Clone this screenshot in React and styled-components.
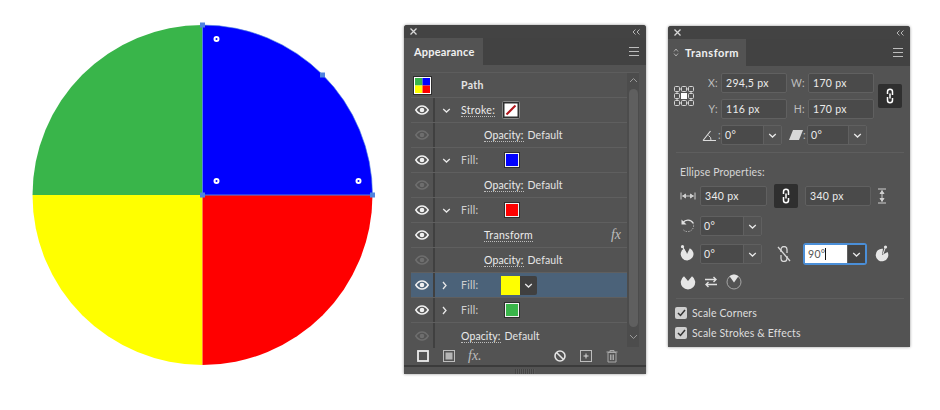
import styled, { createGlobalStyle } from 'styled-components'

const GlobalStyle = createGlobalStyle`
  html, body { margin: 0; padding: 0; background: #fff; }
  body { font-family: "Lato", "Open Sans", sans-serif; }
`

const Page = styled.div`
  width: 940px;
  height: 410px;
  display: flex;
  align-items: flex-start;
  overflow: hidden;
`

const Artwork = styled.svg`
  width: 350px;
  height: 350px;
  flex: none;
  margin: 20px 26px 0 28px;
`

const Panel = styled.section`
  width: 242px;
  height: ${p => p.$height}px;
  flex: none;
  margin-top: ${p => p.$top}px;
  margin-right: 22px;
  background: #535353;
  border-radius: 3px 3px 0 0;
  box-shadow: 0 0 3px rgba(0, 0, 0, .45);
  color: #e4e4e4;
  font-size: 10.5px;
  letter-spacing: .3px;
  display: flex;
  flex-direction: column;
  overflow: hidden;
`

const TitleBar = styled.div`
  height: 13px;
  background: #434343;
  display: flex;
  align-items: center;
  justify-content: space-between;
  padding: 0 6px 0 6px;
  color: #c8c8c8;
  font-size: 9px;
  line-height: 13px;
`

const TabBar = styled.div`
  height: 27px;
  flex: none;
  background: #424242;
  display: flex;
  justify-content: space-between;
  align-items: center;
  padding-right: 7px;
`

const Tab = styled.div`
  width: ${p => p.$width}px;
  height: 27px;
  background: #535353;
  display: flex;
  align-items: center;
  padding-left: ${p => p.$pad}px;
  gap: 6px;
  box-sizing: border-box;
  font-size: 11px;
  font-weight: 700;
  color: #f0f0f0;
  letter-spacing: ${p => p.$spacing}px;
`

const Burger = styled.div`
  width: 10px;
  height: 7px;
  border-top: 1px solid #bdbdbd;
  border-bottom: 1px solid #bdbdbd;
  position: relative;
  &::after {
    content: '';
    position: absolute;
    left: 0;
    right: 0;
    top: 3px;
    height: 1px;
    background: #bdbdbd;
  }
`

const ListBox = styled.div`
  margin: 7px 7px 0;
  display: flex;
  height: 274px;
  border-top: 1px solid #5d5d5d;
`

const Rows = styled.div`
  width: 216px;
  flex: none;
`

const Row = styled.div`
  height: 25px;
  box-sizing: border-box;
  display: flex;
  align-items: center;
  border-bottom: 1px solid #5f5f5f;
  background: ${p => (p.$selected ? '#4b6279' : 'transparent')};
  &:last-child { border-bottom: none; }
`

const EyeCell = styled.div`
  width: 24px;
  height: 100%;
  flex: none;
  box-sizing: border-box;
  border-right: 2px solid ${p => (p.$none ? 'transparent' : '#404040')};
  display: flex;
  align-items: center;
  justify-content: center;
`

const Twist = styled.div`
  width: 26px;
  flex: none;
  display: flex;
  justify-content: center;
  padding-right: ${p => (p.$right ? 8 : 4)}px;
  box-sizing: border-box;
`

const Label = styled.span`
  color: ${p => (p.$dim ? '#cfcfcf' : '#e4e4e4')};
  width: ${p => (p.$width ? `${p.$width}px` : 'auto')};
  margin-left: ${p => p.$indent || 0}px;
  font-weight: ${p => (p.$bold ? 700 : 400)};
  letter-spacing: ${p => (p.$tight ? '.1px' : 'inherit')};
  flex: none;
  white-space: nowrap;
`

const Dotted = styled.span`
  border-bottom: 1px dotted #bdbdbd;
  margin-right: 4px;
  color: #ececec;
`

const Swatch = styled.div`
  width: 12px;
  height: 12px;
  margin-left: 2px;
  background: ${p => p.$color};
  border: 1px solid #f2f2f2;
  outline: 1px solid #2e2e2e;
  flex: none;
`

const StrokeSwatch = styled.svg`
  width: 18px;
  height: 18px;
  flex: none;
  margin-left: -1px;
`

const BigSwatch = styled.div`
  width: 19px;
  height: 19px;
  background: #ffff00;
  flex: none;
  margin-left: -2px;
`

const SwatchMenu = styled.div`
  width: 17px;
  height: 19px;
  background: #404040;
  display: flex;
  align-items: center;
  justify-content: center;
  border-radius: 0 2px 2px 0;
`

const FxMark = styled.span`
  margin-left: auto;
  margin-right: 6px;
  font-family: "Liberation Serif", serif;
  font-style: italic;
  font-size: 14px;
  color: #bdbdbd;
  letter-spacing: 0;
`

const ScrollTrack = styled.div`
  width: 12px;
  flex: none;
  background: #4c4c4c;
  display: flex;
  flex-direction: column;
  align-items: center;
  padding-top: 4px;
  box-sizing: border-box;
`

const ScrollThumb = styled.div`
  width: 9px;
  height: 238px;
  margin: 6px 0 7px;
  background: #5f5f5f;
  border-radius: 5px;
`

const Toolbar = styled.div`
  height: 18px;
  display: flex;
  align-items: center;
  padding-left: 12px;
  color: #c9c9c9;
  flex: none;
`

const Grip = styled.div`
  flex: 1;
  border-top: 2px solid #3b3b3b;
  display: flex;
  justify-content: center;
  padding-top: 2px;
  &::after {
    content: '';
    width: 20px;
    height: 5px;
    background: repeating-linear-gradient(90deg, #444 0 1px, #5a5a5a 1px 2px);
  }
`

const ToolIcon = styled.svg`
  width: 14px;
  height: 14px;
  flex: none;
  margin-left: ${p => p.$gap || 0}px;
`

const FxTool = styled.span`
  font-family: "Liberation Serif", serif;
  font-style: italic;
  font-size: 14px;
  color: #bdbdbd;
  margin-left: ${p => p.$gap}px;
  width: 16px;
  letter-spacing: 0;
`

const TransformBody = styled.div`
  padding: 7px 6px 0 6px;
  display: flex;
  flex-direction: column;
  flex: 1;
  font-size: 10.5px;
`

const RefGrid = styled.div`
  display: flex;
  align-items: flex-start;
`

const RefPoint = styled.svg`
  width: 20px;
  height: 20px;
  margin-top: 13px;
  flex: none;
`

const CoordGrid = styled.div`
  margin-left: 14px;
  display: grid;
  grid-template-columns: 13px 66px 21px 66px;
  grid-auto-rows: 20px;
  row-gap: 6px;
  align-items: center;
`

const CoordLabel = styled.span`
  color: #bdbdbd;
  text-align: right;
  padding-right: 3px;
`

const Field = styled.div`
  width: ${p => p.$width || 66}px;
  height: 20px;
  box-sizing: border-box;
  border: 1px solid #606060;
  border-radius: 2px;
  background: #4a4a4a;
  display: flex;
  align-items: center;
  padding-left: 4px;
  margin-left: ${p => p.$left || 0}px;
  color: #ececec;
  font-size: 10.5px;
  flex: none;
`

const Combo = styled.div`
  width: ${p => p.$width || 62}px;
  height: 20px;
  box-sizing: border-box;
  flex: none;
  display: flex;
  border: 1px solid ${p => (p.$focus ? '#4b8fd8' : '#606060')};
  border-radius: 2px;
  background: #4a4a4a;
  box-shadow: ${p => (p.$focus ? '0 0 0 1px #4b8fd8' : 'none')};
`

const ComboValue = styled.div`
  flex: 1;
  display: flex;
  align-items: center;
  padding-left: 3px;
  color: ${p => (p.$focus ? '#555' : '#ececec')};
  background: ${p => (p.$focus ? '#fff' : 'transparent')};
`

const Caret = styled.i`
  width: 1px;
  height: 12px;
  background: #111;
`

const ComboArrow = styled.div`
  width: 17px;
  flex: none;
  display: flex;
  align-items: center;
  justify-content: center;
  border-left: 1px solid #606060;
  background: ${p => (p.$focus ? '#444' : '#535353')};
`

const LinkButton = styled.div`
  width: 24px;
  height: 24px;
  border-radius: 2px;
  background: #2f2f2f;
  display: flex;
  align-items: center;
  justify-content: center;
  flex: none;
  margin-left: ${p => p.$gap || 0}px;
  margin-top: ${p => p.$top || 0}px;
`

const Separator = styled.div`
  height: 1px;
  background: #5e5e5e;
  margin: ${p => p.$margin};
`

const SectionTitle = styled.div`
  color: #d6d6d6;
  font-size: 10.5px;
  line-height: 14px;
  margin: 12px 0 7px 6px;
  letter-spacing: .13px;
`

const EllipseRow = styled.div`
  display: flex;
  align-items: center;
  height: ${p => p.$height || 20}px;
  margin-top: ${p => p.$before || 0}px;
  margin-bottom: ${p => p.$after || 0}px;
  padding-left: 6px;
`

const RowIcon = styled.svg`
  width: ${p => p.$size || 16}px;
  height: ${p => p.$tall || p.$size || 16}px;
  flex: none;
  margin-left: ${p => p.$left || 0}px;
  margin-right: ${p => p.$right || 0}px;
`

const Colon = styled.span`
  color: #bdbdbd;
  width: ${p => p.$width}px;
  flex: none;
`

const CheckRow = styled.label`
  display: flex;
  align-items: center;
  gap: 5px;
  height: 20px;
  margin-left: 1px;
  color: #dedede;
  letter-spacing: .15px;
`

const CheckBox = styled.span`
  width: 12px;
  height: 12px;
  background: #cfcfcf;
  border-radius: 2px;
  display: flex;
  align-items: center;
  justify-content: center;
`

const Eye = ({ dim }) => (
  <svg width="14" height="10" viewBox="0 0 14 10">
    <path d="M.8 5C2.6 2.2 4.7 1 7 1s4.4 1.2 6.2 4C11.4 7.8 9.300 9 7 9S2.600 7.800.8 5z" fill="none" stroke={dim ? '#6e6e6e' : '#f0f0f0'} strokeWidth="1.500" />
    <circle cx="7" cy="5" r="2.300" fill={dim ? '#6e6e6e' : '#f0f0f0'} />
  </svg>
)

const Chevron = ({ dir = 'down', color = '#e8e8e8' }) => (
  <svg width="9" height="9" viewBox="0 0 9 9">
    <path d={dir === 'down' ? 'M1.200 3l3.300 3 3.300-3' : 'M3 1l3 3.500-3 3.500'} fill="none" stroke={color} strokeWidth="1.300" />
  </svg>
)

const CloseX = () => (
  <svg width="7" height="7" viewBox="0 0 7 7">
    <path d="M.5.5l6 6M6.500.5l-6 6" stroke="#d8d8d8" strokeWidth="1.300" />
  </svg>
)

const Collapse = () => (
  <svg width="8" height="6" viewBox="0 0 8 6">
    <path d="M3.500.5L1 3l2.500 2.500M7.500.5L5 3l2.500 2.500" fill="none" stroke="#b5b5b5" />
  </svg>
)

const ChainLink = ({ color = '#fff' }) => (
  <svg width="10" height="16" viewBox="0 0 10 16">
    <path d="M2.500 6V3.800a2.500 2.500 0 0 1 5 0V7M7.500 10v2.200a2.500 2.500 0 0 1-5 0V9M5 5.500v5" fill="none" stroke={color} strokeWidth="1.500" />
  </svg>
)

const Check = () => (
  <svg width="9" height="8" viewBox="0 0 9 8"><path d="M1 4l2.500 2.500L8 1" fill="none" stroke="#333" strokeWidth="1.500" /></svg>
)

const cx = 174.5
const cy = 175
const r = 170

const quarter = (x, y, sweepX, sweepY) =>
  `M${cx} ${cy}L${cx + x * r} ${cy + y * r}A${r} ${r} 0 0 1 ${cx + sweepX * r} ${cy + sweepY * r}Z`

const Anchor = ({ x, y }) => <rect x={x - 2.500} y={y - 2.500} width="5" height="5" fill="#4f83e0" />

const Widget = ({ x, y }) => (
  <circle cx={x} cy={y} r="2" fill="#0000ff" stroke="#fff" strokeWidth="2" />
)

function Circle() {
  return (
    <Artwork viewBox="0 0 350 350">
      <path d={quarter(-1, 0, 0, -1)} fill="#39b54a" />
      <path d={quarter(0, 1, -1, 0)} fill="#ffff00" />
      <path d={quarter(1, 0, 0, 1)} fill="#ff0000" />
      <path d={quarter(0, -1, 1, 0)} fill="#0000ff" />
      <path d={`M${cx} ${cy - r}V${cy}H${cx + r}`} fill="none" stroke="#4f83e0" />
      <path d={`M${cx} ${cy - r}A${r} ${r} 0 0 1 ${cx + r} ${cy}`} fill="none" stroke="#4f83e0" strokeOpacity=".6" />
      <Anchor x={cx} y={cy - r} />
      <Anchor x={cx + 120} y={cy - 120} />
      <Anchor x={cx + r} y={cy} />
      <Anchor x={cx} y={cy} />
      <Widget x={cx + 14} y={cy - 156} />
      <Widget x={cx + 14} y={cy - 14} />
      <Widget x={cx + 156} y={cy - 14} />
    </Artwork>
  )
}

const AppearanceRow = ({ dim, twist, selected, children }) => (
  <Row $selected={selected}>
    <EyeCell><Eye dim={dim} /></EyeCell>
    <Twist $right={twist === 'right'}>{twist && <Chevron dir={twist} />}</Twist>
    {children}
  </Row>
)

const OpacityRow = ({ indent = 23 }) => (
  <AppearanceRow dim>
    <Label $indent={indent} $tight><Dotted>Opacity:</Dotted>Default</Label>
  </AppearanceRow>
)

function AppearancePanel() {
  return (
    <Panel $height={349} $top={25}>
      <TitleBar><CloseX /><Collapse /></TitleBar>
      <TabBar>
        <Tab $width={79} $pad={10} $spacing={0.2}>Appearance</Tab>
        <Burger />
      </TabBar>
      <ListBox>
        <Rows>
          <Row>
            <EyeCell $none>
              <svg width="19" height="19" viewBox="0 0 19 19">
                <rect x=".5" y=".5" width="18" height="18" fill="#fff" stroke="#2e2e2e" />
                <rect x="2" y="2" width="7.500" height="7.500" fill="#39b54a" />
                <rect x="9.500" y="2" width="7.500" height="7.500" fill="#0000ff" />
                <rect x="2" y="9.500" width="7.500" height="7.500" fill="#ffff00" />
                <rect x="9.500" y="9.500" width="7.500" height="7.500" fill="#ff0000" />
              </svg>
            </EyeCell>
            <Twist />
            <Label $bold>Path</Label>
          </Row>
          <AppearanceRow twist="down">
            <Label $width={42}><Dotted>Stroke:</Dotted></Label>
            <StrokeSwatch viewBox="0 0 18 18">
              <rect x=".5" y=".5" width="17" height="17" rx="1" fill="#2e2e2e" stroke="#888" />
              <rect x="2.500" y="2.500" width="13" height="13" fill="#fff" />
              <path d="M4.500 13.500L13.500 4.500" stroke="#b0151b" strokeWidth="2" />
            </StrokeSwatch>
          </AppearanceRow>
          <OpacityRow />
          <AppearanceRow twist="down">
            <Label $width={42} $dim>Fill:</Label>
            <Swatch $color="#0000ff" />
          </AppearanceRow>
          <OpacityRow />
          <AppearanceRow twist="down">
            <Label $width={42} $dim>Fill:</Label>
            <Swatch $color="#ff0000" />
          </AppearanceRow>
          <AppearanceRow>
            <Label $indent={23}><Dotted>Transform</Dotted></Label>
            <FxMark>fx</FxMark>
          </AppearanceRow>
          <OpacityRow />
          <AppearanceRow twist="right" selected>
            <Label $width={42} $dim>Fill:</Label>
            <BigSwatch />
            <SwatchMenu><Chevron /></SwatchMenu>
          </AppearanceRow>
          <AppearanceRow twist="right">
            <Label $width={42} $dim>Fill:</Label>
            <Swatch $color="#39b54a" />
          </AppearanceRow>
          <OpacityRow indent={0} />
        </Rows>
        <ScrollTrack>
          <svg width="9" height="6" viewBox="0 0 9 6"><path d="M1 5l3.500-3.500L8 5" fill="none" stroke="#9a9a9a" /></svg>
          <ScrollThumb />
          <svg width="9" height="6" viewBox="0 0 9 6"><path d="M1 1l3.500 3.500L8 1" fill="none" stroke="#9a9a9a" /></svg>
        </ScrollTrack>
      </ListBox>
      <Toolbar>
        <ToolIcon viewBox="0 0 14 14"><rect x="2" y="2" width="10" height="10" fill="none" stroke="#ececec" strokeWidth="1.800" /></ToolIcon>
        <ToolIcon $gap={12} viewBox="0 0 14 14"><rect x="1.500" y="1.500" width="11" height="11" fill="none" stroke="#bdbdbd" /><rect x="3.500" y="3.500" width="7" height="7" fill="#b5b5b5" /></ToolIcon>
        <FxTool $gap={12}>fx.</FxTool>
        <ToolIcon $gap={69} viewBox="0 0 14 14"><circle cx="7" cy="7" r="5" fill="none" stroke="#e4e4e4" strokeWidth="1.600" /><path d="M3.500 3.500l7 7" stroke="#e4e4e4" strokeWidth="1.600" /></ToolIcon>
        <ToolIcon $gap={12} viewBox="0 0 14 14"><rect x="1.500" y="1.500" width="11" height="11" fill="none" stroke="#bdbdbd" /><path d="M7 4.500v5M4.500 7h5" stroke="#dcdcdc" /></ToolIcon>
        <ToolIcon $gap={12} viewBox="0 0 14 14"><path d="M3 3.500h8V13H3zM1.500 3h11M5 3V1.500h4V3M5.500 5.500v5.500M7 5.500v5.500M8.500 5.500v5.500" fill="none" stroke="#a8a8a8" /></ToolIcon>
      </Toolbar>
      <Grip />
    </Panel>
  )
}

const Dropdown = ({ value, width, focus }) => (
  <Combo $width={width} $focus={focus}>
    <ComboValue $focus={focus}>{value}{focus && <Caret />}</ComboValue>
    <ComboArrow $focus={focus}><Chevron /></ComboArrow>
  </Combo>
)

const refPoints = [0.500, 7.500, 14.500]

function TransformPanel() {
  return (
    <Panel $height={321} $top={26}>
      <TitleBar><CloseX /><Collapse /></TitleBar>
      <TabBar>
        <Tab $width={78} $pad={5} $spacing={0.5}>
          <svg width="6" height="9" viewBox="0 0 6 9"><path d="M1 3.500L3 1l2 2.500M1 5.500L3 8l2-2.500" fill="none" stroke="#aaa" /></svg>
          Transform
        </Tab>
        <Burger />
      </TabBar>
      <TransformBody>
        <RefGrid>
          <RefPoint viewBox="0 0 20 20">
            <path d="M5.500 3h2M12.500 3h2M5.500 17h2M12.500 17h2M3 5.500v2M3 12.500v2M17 5.500v2M17 12.500v2" stroke="#d4d4d4" />
            {refPoints.flatMap(y => refPoints.map(x => (
              x === 7.500 && y === 7.500
                ? <rect key={`${x}-${y}`} x="7" y="7" width="6" height="6" fill="#fff" />
                : <rect key={`${x}-${y}`} x={x} y={y} width="5" height="5" rx="1" fill="none" stroke="#d4d4d4" />
            )))}
          </RefPoint>
          <CoordGrid>
            <CoordLabel>X:</CoordLabel><Field>294,5 px</Field>
            <CoordLabel>W:</CoordLabel><Field>170 px</Field>
            <CoordLabel>Y:</CoordLabel><Field>116 px</Field>
            <CoordLabel>H:</CoordLabel><Field>170 px</Field>
          </CoordGrid>
          <LinkButton $gap={4} $top={11}><ChainLink /></LinkButton>
        </RefGrid>
        <EllipseRow $before={6}>
          <RowIcon $left={22} $right={1} $size={15} viewBox="0 0 15 15"><path d="M1 12.500L8.500 3M1 12.500h13" fill="none" stroke="#dcdcdc" strokeWidth="1.200" /><path d="M6.500 7.500A5 5 0 0 1 9 12.500" fill="none" stroke="#dcdcdc" /></RowIcon>
          <Colon $width={3}>:</Colon>
          <Dropdown value="0°" width={61} />
          <RowIcon $left={7} $size={14} viewBox="0 0 14 14"><path d="M0 12L4 2h10l-4 10z" fill="#d8d8d8" /></RowIcon>
          <Colon $width={4}>:</Colon>
          <Dropdown value="0°" width={60} />
        </EllipseRow>
        <Separator $margin="7px 0 0 2px" />
        <SectionTitle>Ellipse Properties:</SectionTitle>
        <EllipseRow $after={10}>
          <RowIcon $right={4} viewBox="0 0 16 16"><path d="M1 4.500v7M15 4.500v7M2 8h12M3 8l2.500-2v4zM13 8l-2.500-2v4z" fill="#cfcfcf" stroke="#cfcfcf" /></RowIcon>
          <Field $width={67}>340 px</Field>
          <LinkButton $gap={7}><ChainLink /></LinkButton>
          <Field $width={66} $left={7}>340 px</Field>
          <RowIcon $left={3} viewBox="0 0 16 16"><path d="M4 1h8M4 15h8M8 2v12M8 3L6 5.500h4zM8 13l-2-2.500h4z" fill="#cfcfcf" stroke="#cfcfcf" /></RowIcon>
        </EllipseRow>
        <EllipseRow $after={8}>
          <RowIcon $right={4} viewBox="0 0 16 16"><path d="M3.500 12a6 6 0 0 0 9.500-7" fill="none" stroke="#bcbcbc" strokeDasharray="1.300 1.200" /><path d="M3 4.500a6.200 6.200 0 0 1 10.200.6" fill="none" stroke="#e0e0e0" strokeWidth="1.400" /><path d="M1.500 1.500v5h5z" fill="#e0e0e0" /></RowIcon>
          <Dropdown value="0°" />
        </EllipseRow>
        <EllipseRow $after={10}>
          <RowIcon $right={4} $tall={18} viewBox="0 0 16 18"><path d="M7 9L4 3.400A6.400 6.400 0 1 0 9.800 3.200Z" fill="#e6e6e6" /><circle cx="2.500" cy="1.700" r="1.600" fill="#e6e6e6" /><path d="M2.500 1.700L6.500 8.500" stroke="#e6e6e6" /></RowIcon>
          <Dropdown value="0°" />
          <RowIcon $left={14} $right={12} viewBox="0 0 16 16">
            <path d="M5 6V3.500a3 3 0 0 1 6 0V7M11 10v2.500a3 3 0 0 1-6 0V9" fill="none" stroke="#d8d8d8" strokeWidth="1.300" /><path d="M2 1l12 14" stroke="#d8d8d8" strokeWidth="1.300" />
          </RowIcon>
          <Dropdown value="90°" focus />
          <RowIcon $left={9} $size={15} $tall={18} viewBox="0 0 15 18"><path d="M7 10L8 3.800A6.300 6.300 0 1 0 12.600 7.100Z" fill="#e6e6e6" /><circle cx="10.500" cy="2" r="1.600" fill="#e6e6e6" /><path d="M10.500 2L8 9" stroke="#e6e6e6" /></RowIcon>
        </EllipseRow>
        <EllipseRow $height={16}>
          <RowIcon viewBox="0 0 16 16"><path d="M8 7L4 2.300A7.200 7.200 0 1 0 12 2.300Z" fill="#e6e6e6" /></RowIcon>
          <RowIcon $left={8} $right={8} $size={14} viewBox="0 0 14 14"><path d="M1 4.500h11M9.500 2L12 4.500 9.500 7M13 9.500H2M4.500 7L2 9.500 4.500 12" fill="none" stroke="#e0e0e0" strokeWidth="1.400" /></RowIcon>
          <RowIcon viewBox="0 0 16 16"><circle cx="8" cy="8" r="7" fill="none" stroke="#a5a5a5" /><path d="M8 8.500L3.500 2.200a7 7 0 0 1 9 0z" fill="#e6e6e6" /></RowIcon>
        </EllipseRow>
        <Separator $margin="8px 0 4px 2px" />
        <CheckRow>
          <CheckBox><Check /></CheckBox>Scale Corners
        </CheckRow>
        <CheckRow>
          <CheckBox><Check /></CheckBox>Scale Strokes &amp; Effects
        </CheckRow>
      </TransformBody>
    </Panel>
  )
}

export default function App() {
  return (
    <Page>
      <GlobalStyle />
      <Circle />
      <AppearancePanel />
      <TransformPanel />
    </Page>
  )
}
